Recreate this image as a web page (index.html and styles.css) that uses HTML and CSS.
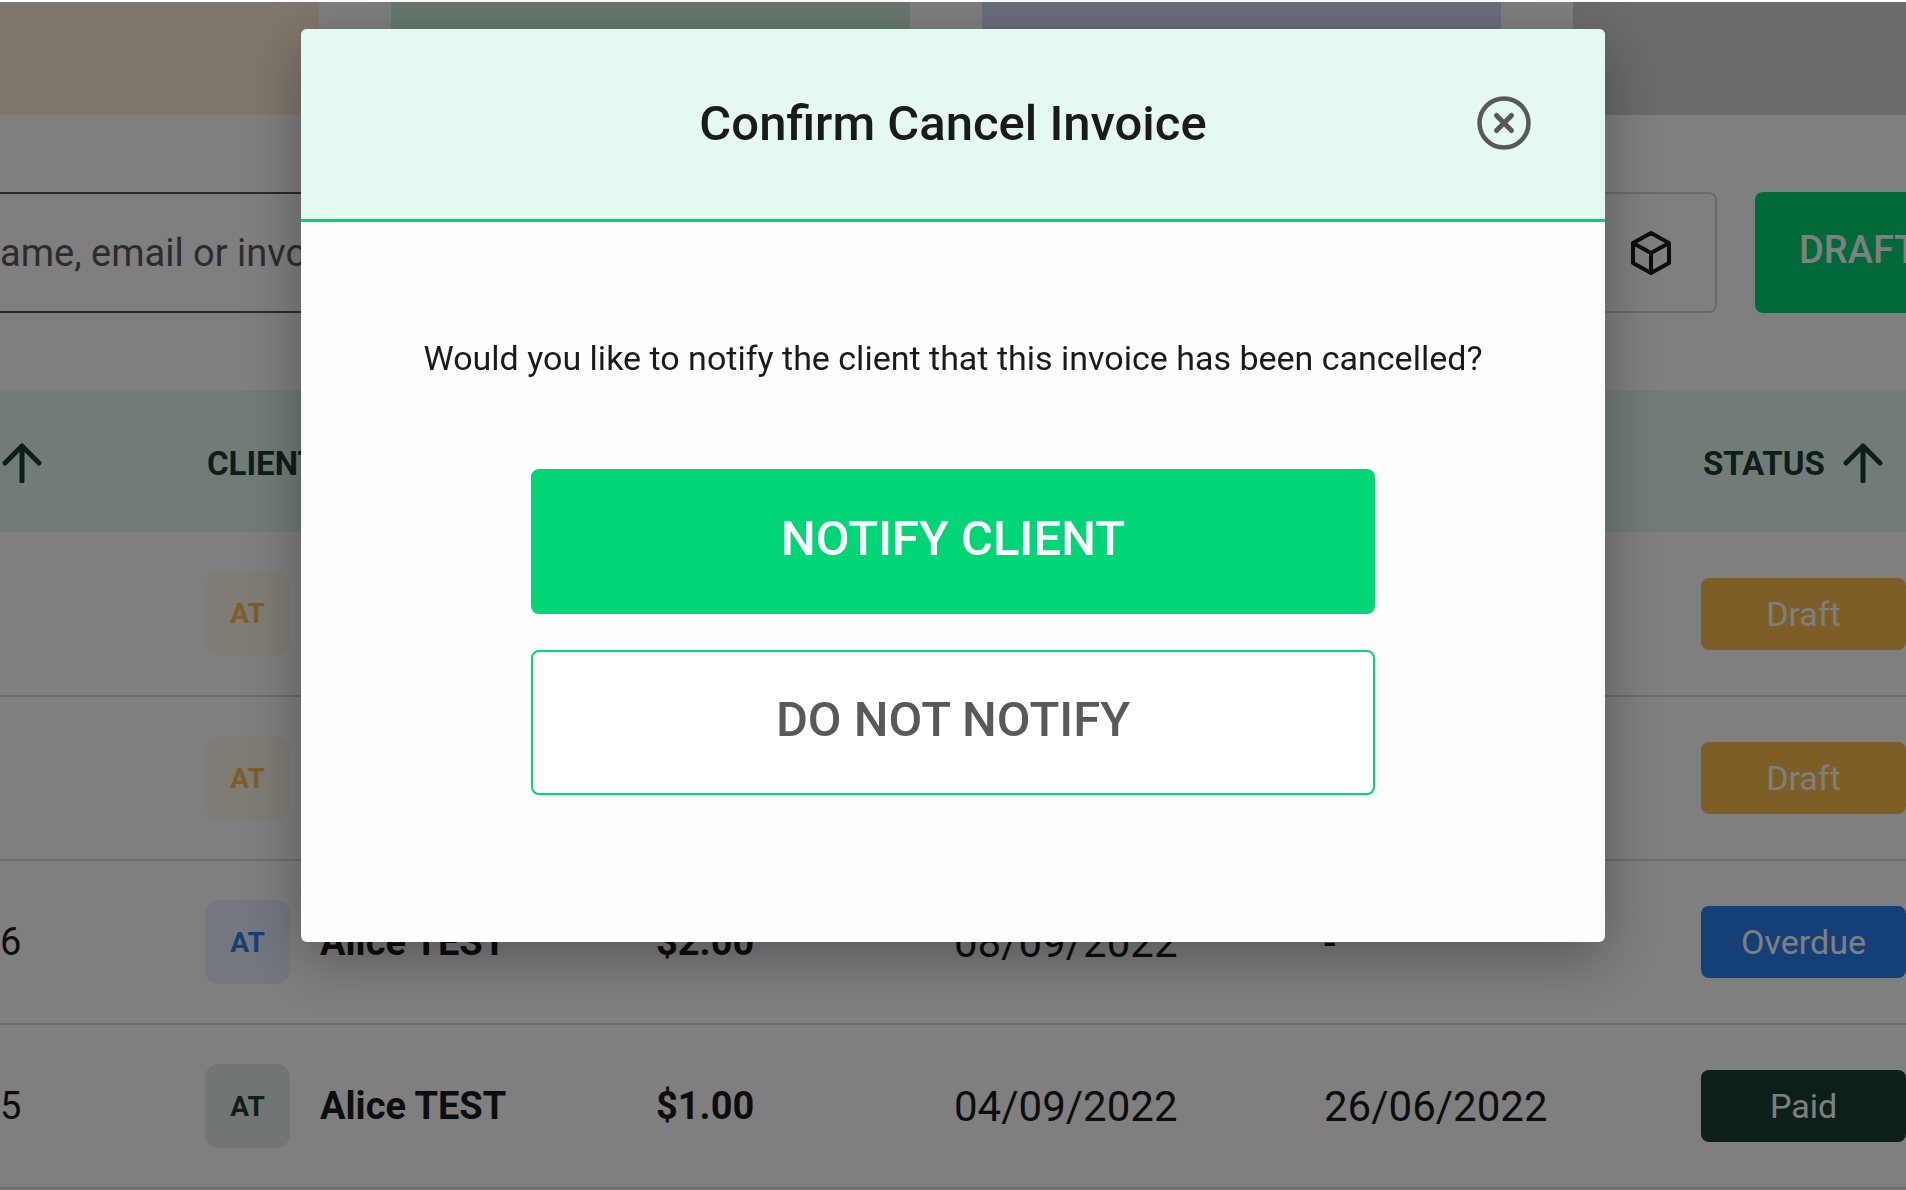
FILE: index.html
```html
<!DOCTYPE html>
<html lang="en">

<head>
    <meta charset="UTF-8">
    <meta name="viewport" content="width=device-width, initial-scale=1.0">
    <title>Invoices</title>
    <link rel="stylesheet" href="styles.css">
</head>

<body>
    <main class="page">
        <section class="cards">
            <div class="card card-draft"></div>
            <div class="card card-paid"></div>
            <div class="card card-overdue"></div>
            <div class="card card-other"></div>
        </section>

        <section class="toolbar">
            <input class="search" type="text" placeholder="ame, email or invoice" aria-label="Search">
            <button class="filter" type="button">
                Filters
                <svg class="cube" viewBox="0 0 40 44" fill="none" stroke="currentColor" stroke-width="4" stroke-linejoin="round">
                    <path d="M20 2 L38 12 V32 L20 42 L2 32 V12 Z M2 12 L20 22 L38 12 M20 22 V42" />
                </svg>
            </button>
            <button class="draft" type="button">DRAFT</button>
        </section>

        <table class="invoices">
            <colgroup>
                <col class="col-number">
                <col class="col-client">
                <col class="col-amount">
                <col class="col-date">
                <col class="col-date-paid">
                <col>
            </colgroup>
            <thead>
                <tr>
                    <th>
                        <svg class="arrow" viewBox="0 0 40 40"><path d="M20 38 V3 M3 20 L20 3 L37 20" /></svg>
                    </th>
                    <th>CLIENT</th>
                    <th></th>
                    <th></th>
                    <th></th>
                    <th>
                        <span class="sort">STATUS
                            <svg class="arrow" viewBox="0 0 40 40"><path d="M20 38 V3 M3 20 L20 3 L37 20" /></svg>
                        </span>
                    </th>
                </tr>
            </thead>
            <tbody>
                <tr>
                    <td></td>
                    <td><div class="client"><span class="avatar orange">AT</span></div></td>
                    <td></td>
                    <td></td>
                    <td></td>
                    <td><span class="badge badge-draft">Draft</span></td>
                </tr>
                <tr>
                    <td></td>
                    <td><div class="client"><span class="avatar orange">AT</span></div></td>
                    <td></td>
                    <td></td>
                    <td></td>
                    <td><span class="badge badge-draft">Draft</span></td>
                </tr>
                <tr>
                    <td class="number">6</td>
                    <td><div class="client"><span class="avatar blue">AT</span>Alice TEST</div></td>
                    <td class="amount">$2.00</td>
                    <td>08/09/2022</td>
                    <td>-</td>
                    <td><span class="badge badge-overdue">Overdue</span></td>
                </tr>
                <tr>
                    <td class="number">5</td>
                    <td><div class="client"><span class="avatar green">AT</span>Alice TEST</div></td>
                    <td class="amount">$1.00</td>
                    <td>04/09/2022</td>
                    <td>26/06/2022</td>
                    <td><span class="badge badge-paid">Paid</span></td>
                </tr>
            </tbody>
        </table>
    </main>

    <div class="overlay">
        <div class="modal" role="dialog" aria-modal="true" aria-labelledby="modal-title">
            <header class="modal-header">
                <h2 id="modal-title">Confirm Cancel Invoice</h2>
                <button class="close" type="button" aria-label="Close">
                    <svg viewBox="0 0 54 54" fill="none" stroke="currentColor" stroke-linecap="round">
                        <circle cx="27" cy="27" r="24.5" stroke-width="4.5" />
                        <path d="M19.5 19.5 L34.5 34.5 M34.5 19.5 L19.5 34.5" stroke-width="5" />
                    </svg>
                </button>
            </header>
            <div class="modal-body">
                <p>Would you like to notify the client that this invoice has been cancelled?</p>
                <button class="btn btn-primary" type="button">NOTIFY CLIENT</button>
                <button class="btn btn-outline" type="button">DO NOT NOTIFY</button>
            </div>
        </div>
    </div>
</body>

</html>
```
FILE: styles.css
```css
* {
    box-sizing: border-box;
}

body {
    margin: 0;
    height: 100vh;
    overflow: hidden;
    background: #fff;
    color: #1a1a1a;
    font-family: Roboto, "Liberation Sans", sans-serif;
}

button,
input {
    font-family: inherit;
}

.page {
    padding-top: 2px;
}

.cards {
    display: grid;
    grid-template-columns: 319px 519px 519px 1fr;
    column-gap: 72px;
    height: 113px;
}

.card-draft {
    background: #ffeed8;
}

.card-paid {
    background: #d2f2de;
}

.card-overdue {
    background: #d4def8;
}

.card-other {
    background: #d4d8d6;
}

/* search, filter and draft button */
.toolbar {
    display: flex;
    height: 121px;
    margin: 77px 0;
}

.search {
    flex: 1;
    min-width: 0;
    padding: 0;
    border: solid #555;
    border-width: 2px 0;
    background: #fff;
    font-size: 38px;
}

.search::placeholder {
    color: #595959;
    opacity: 1;
}

.filter {
    display: flex;
    align-items: center;
    justify-content: flex-end;
    gap: 26px;
    width: 420px;
    padding: 0 44px 0 0;
    border: 2px solid #d4d4d4;
    border-radius: 8px;
    background: #fff;
    color: #1a1a1a;
    font-size: 38px;
}

.cube {
    width: 40px;
    height: 44px;
}

.draft {
    width: 151px;
    margin-left: 38px;
    padding: 0 0 6px 44px;
    border: 0;
    border-radius: 8px 0 0 8px;
    background: #02d576;
    color: #fff;
    font-size: 38px;
    font-weight: 500;
    text-align: left;
    overflow: hidden;
}

/* invoices table */
.invoices {
    width: 100%;
    table-layout: fixed;
    border-collapse: collapse;
    font-size: 42px;
}

.col-number {
    width: 205px;
}

.col-client {
    width: 451px;
}

.col-amount {
    width: 298px;
}

.col-date {
    width: 370px;
}

.col-date-paid {
    width: 377px;
}

.invoices th {
    height: 142px;
    padding: 4px 2px 0;
    background: #e4f8ee;
    color: #183e32;
    font-size: 33px;
    font-weight: 700;
    text-align: left;
}

.invoices td {
    height: 164px;
    padding: 0;
    border-bottom: 2px solid #dadada;
    white-space: nowrap;
}

.invoices .number {
    font-size: 38px;
}

.sort {
    display: flex;
    align-items: center;
    gap: 18px;
}

.arrow {
    display: block;
    width: 40px;
    height: 40px;
    fill: none;
    stroke: #183e32;
    stroke-width: 5;
    stroke-linecap: round;
    stroke-linejoin: round;
}

.client {
    display: flex;
    align-items: center;
    gap: 30px;
    font-size: 38px;
    font-weight: 700;
}

.avatar {
    display: flex;
    align-items: center;
    justify-content: center;
    width: 85px;
    height: 84px;
    border-radius: 14px;
    font-size: 28px;
}

.orange {
    background: #fff6ea;
    color: #f8bc4c;
}

.blue {
    background: #e8effe;
    color: #2a80ee;
}

.green {
    background: #e2eae6;
    color: #183e32;
}

.invoices .amount {
    font-size: 38px;
    font-weight: 700;
}

.badge {
    display: flex;
    align-items: center;
    justify-content: center;
    height: 72px;
    border-radius: 8px;
    color: #fff;
    font-size: 34px;
}

.badge-draft {
    background: #f8bc4c;
}

.badge-overdue {
    background: #2a80ee;
}

.badge-paid {
    background: #183e32;
}

/* confirm modal */
.overlay {
    position: fixed;
    inset: 2px 0 0;
    display: flex;
    align-items: flex-start;
    justify-content: center;
    padding: 27px 24px;
    background: rgba(0, 0, 0, 0.5);
}

.modal {
    width: 100%;
    max-width: 1304px;
    overflow: hidden;
    border-radius: 6px;
    background: #fdfdfd;
    box-shadow: 0 16px 60px rgba(0, 0, 0, 0.32);
}

.modal-header {
    display: grid;
    grid-template-columns: 54px 1fr 54px;
    align-items: center;
    padding: 0 74px 2px;
    height: 193px;
    border-bottom: 3px solid #02d576;
    background: #e4f9f0;
}

.modal-header h2 {
    grid-column: 2;
    margin: 0;
    font-size: 49px;
    font-weight: 500;
    text-align: center;
}

.close {
    width: 54px;
    height: 54px;
    padding: 0;
    border: 0;
    background: none;
    color: #595959;
}

.close svg {
    display: block;
}

.modal-body {
    display: flex;
    flex-direction: column;
    align-items: center;
    gap: 36px;
    padding: 116px 48px 147px;
}

.modal-body p {
    margin: 0 0 55px;
    font-size: 34px;
    line-height: 40px;
    text-align: center;
}

.btn {
    width: 100%;
    max-width: 844px;
    height: 145px;
    padding: 0 0 6px;
    border: 2px solid #02d576;
    border-radius: 8px;
    font-size: 49px;
    font-weight: 500;
}

.btn-primary {
    background: #02d576;
    color: #fff;
}

.btn-outline {
    background: #fff;
    color: #595959;
}
```
